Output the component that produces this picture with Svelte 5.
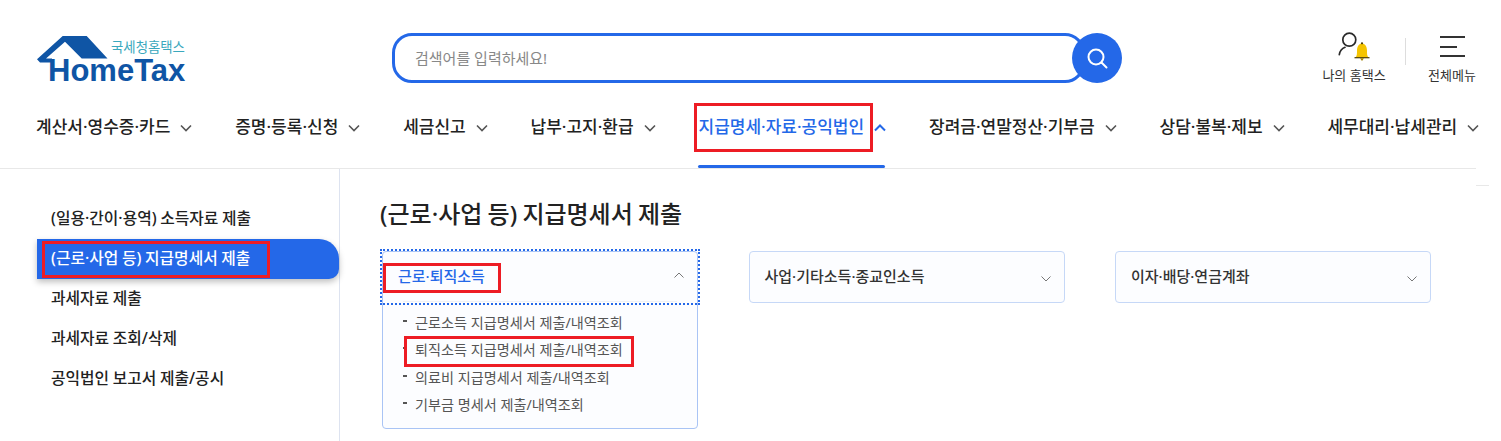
<script>
	const navItems = [
		{ label: '계산서·영수증·카드' },
		{ label: '증명·등록·신청' },
		{ label: '세금신고' },
		{ label: '납부·고지·환급' },
		{ label: '지급명세·자료·공익법인', active: true },
		{ label: '장려금·연말정산·기부금' },
		{ label: '상담·불복·제보' },
		{ label: '세무대리·납세관리' }
	];

	const sideItems = [
		{ label: '(일용·간이·용역) 소득자료 제출' },
		{ label: '(근로·사업 등) 지급명세서 제출', active: true },
		{ label: '과세자료 제출' },
		{ label: '과세자료 조회/삭제' },
		{ label: '공익법인 보고서 제출/공시' }
	];

	const subItems = [
		{ label: '근로소득 지급명세서 제출/내역조회' },
		{ label: '퇴직소득 지급명세서 제출/내역조회', marked: true },
		{ label: '의료비 지급명세서 제출/내역조회' },
		{ label: '기부금 명세서 제출/내역조회' }
	];
</script>

<div class="page">
	<header class="header">
		<div class="top">
			<a class="logo" href="#home">
				<svg class="roof" viewBox="0 0 72 28" width="72" height="28" aria-hidden="true">
					<path d="M0 23.3 L25.7 0 L49.7 0 L70.5 22.5 L44.7 22.5 L28 5.7 L9 22.5 L15 22.5 L15 26.5 L3 26.5 Z" fill="#0f55a5" />
				</svg>
				<span class="logo_sub">국세청홈택스</span>
				<span class="logo_main">HomeTax</span>
			</a>

			<div class="search">
				<div class="search_box">검색어를 입력하세요!</div>
				<button class="search_btn" aria-label="검색">
					<svg viewBox="0 0 24 24" width="24" height="24" fill="none" stroke="#fff" stroke-width="2">
						<circle cx="11" cy="11" r="7.5" />
						<path d="M16.5 16.5 L21.5 21.5" stroke-linecap="round" />
					</svg>
				</button>
			</div>

			<div class="util">
				<div class="util_item my">
					<svg viewBox="0 0 34 32" width="34" height="32" aria-hidden="true">
						<circle cx="12.3" cy="8.7" r="6.5" fill="none" stroke="#2a2a2a" stroke-width="1.7" />
						<path d="M2.3 23.7 C3 19.5 5 17.3 8 16.3" fill="none" stroke="#2a2a2a" stroke-width="1.7" stroke-linecap="round" />
						<path d="M18.5 26.5 C20 25 20 23 20 19.5 C20 15 22.5 12.5 25 12.5 C27.5 12.5 30 15 30 19.5 C30 23 30 25 31.5 26.5 Z" fill="#f5c400" />
						<path d="M17.5 26.7 H32.5" stroke="#4a3c00" stroke-width="1.2" />
						<path d="M23 27.3 H27 L25 30 Z" fill="#a08000" />
						<circle cx="25" cy="12.3" r="1.1" fill="#4a3c00" />
					</svg>
					<span>나의 홈택스</span>
				</div>
				<div class="util_sep"></div>
				<div class="util_item menu">
					<div class="burger">
						<i></i>
						<i class="short"></i>
						<i></i>
					</div>
					<span>전체메뉴</span>
				</div>
			</div>
		</div>

		<nav class="nav">
			{#each navItems as item}
				<div class="nav_item" class:active={item.active}>
					<span class="nav_text">{item.label}</span>
					<svg viewBox="0 0 12 8" width="12" height="8" fill="none" stroke="currentColor" stroke-width="1.6" aria-hidden="true">
						{#if item.active}
							<path d="M1 6.5 L6 1.5 L11 6.5" />
						{:else}
							<path d="M1 1.5 L6 6.5 L11 1.5" />
						{/if}
					</svg>
					{#if item.active}
						<span class="mark nav_mark"></span>
					{/if}
				</div>
			{/each}
		</nav>
	</header>
	<div class="edge"></div>

	<div class="body">
		<aside class="side">
			{#each sideItems as item}
				<div class="side_item" class:active={item.active}>
					{item.label}
					{#if item.active}
						<span class="mark side_mark"></span>
					{/if}
				</div>
			{/each}
		</aside>

		<main class="main">
			<h1 class="title">(근로·사업 등) 지급명세서 제출</h1>
			<div class="cards">
				<div class="card open">
					<div class="card_head focus">
						<span class="card_title">근로·퇴직소득</span>
						<svg class="chev_up" viewBox="0 0 10 6" width="10" height="6" fill="none" stroke="#777" stroke-width="1" aria-hidden="true">
							<path d="M0.5 5.5 L5 1 L9.5 5.5" />
						</svg>
						<span class="mark head_mark"></span>
					</div>
					<ul class="sub">
						{#each subItems as sub}
							<li>
								{sub.label}
								{#if sub.marked}
									<span class="mark sub_mark"></span>
								{/if}
							</li>
						{/each}
					</ul>
				</div>
				<div class="card">
					<div class="card_head">
						<span class="card_title">사업·기타소득·종교인소득</span>
						<svg class="chev_down" viewBox="0 0 10 6" width="10" height="6" fill="none" stroke="#777" stroke-width="1" aria-hidden="true">
							<path d="M0.5 0.5 L5 5 L9.5 0.5" />
						</svg>
					</div>
				</div>
				<div class="card">
					<div class="card_head">
						<span class="card_title">이자·배당·연금계좌</span>
						<svg class="chev_down" viewBox="0 0 10 6" width="10" height="6" fill="none" stroke="#777" stroke-width="1" aria-hidden="true">
							<path d="M0.5 0.5 L5 5 L9.5 0.5" />
						</svg>
					</div>
				</div>
			</div>
		</main>
	</div>
</div>

<style>
	:global(body) {
		margin: 0;
		background: #fff;
		overflow: hidden;
	}

	.page {
		position: relative;
		width: 1476px;
		height: 441px;
		font-family: 'Noto Sans', 'Noto Sans CJK KR', sans-serif;
		color: #222;
	}

	/* ---------- HEADER ---------- */

	.header {
		height: 168px;
		border-bottom: 1px solid #e8e8e8;
	}

	.top {
		display: flex;
		height: 100px;
		box-sizing: border-box;
		padding: 33px 0 0 37px;
	}

	.top > * {
		flex-shrink: 0;
	}

	.logo {
		position: relative;
		display: block;
		width: 150px;
		height: 52px;
		text-decoration: none;
	}

	.roof {
		position: absolute;
		left: 0;
		top: 3px;
	}

	.logo_sub {
		position: absolute;
		left: 74px;
		top: 5px;
		font-size: 13.4px;
		line-height: 18px;
		color: #3aa8bd;
		white-space: nowrap;
	}

	.logo_main {
		position: absolute;
		left: 11px;
		top: 20px;
		font-family: 'Liberation Sans', sans-serif;
		font-size: 31px;
		line-height: 36px;
		font-weight: 700;
		color: #0f55a5;
		white-space: nowrap;
	}

	.search {
		display: flex;
		align-items: center;
		margin-left: 205px;
		height: 50px;
	}

	.search_box {
		box-sizing: border-box;
		width: 693px;
		height: 50px;
		border: 3px solid #2468e8;
		border-radius: 20px;
		padding-left: 20px;
		font-size: 15px;
		line-height: 44px;
		color: #888;
		background: #fff;
	}

	.search_btn {
		flex-shrink: 0;
		width: 50px;
		height: 50px;
		margin-left: -13px;
		border: none;
		border-radius: 50%;
		background: #2468e8;
		display: flex;
		align-items: center;
		justify-content: center;
		padding: 0;
	}

	.util {
		display: flex;
		align-items: flex-start;
		margin-left: 198px;
	}

	.util_item {
		display: flex;
		flex-direction: column;
		align-items: center;
		font-size: 13px;
		line-height: 16px;
		color: #333;
		white-space: nowrap;
	}

	.util_item.my {
		width: 68px;
	}

	.util_item.my svg {
		margin-top: -2px;
		margin-bottom: 4px;
	}

	.util_sep {
		width: 1px;
		height: 27px;
		margin: 5px 21px 0 17px;
		background: #ddd;
	}

	.util_item.menu {
		width: 50px;
	}

	.burger {
		display: flex;
		flex-direction: column;
		align-items: flex-start;
		gap: 7.5px;
		width: 25px;
		padding: 3px 0 10px;
	}

	.burger i {
		display: block;
		width: 25px;
		height: 2px;
		background: #333;
	}

	.burger i.short {
		width: 17px;
	}

	/* ---------- NAV ---------- */

	.nav {
		display: flex;
		height: 68px;
		padding-left: 36px;
		white-space: nowrap;
	}

	.nav_item {
		position: relative;
		display: flex;
		align-items: flex-start;
		padding-top: 16px;
		margin-right: 42.85px;
		font-size: 17px;
		line-height: 22px;
		font-weight: 500;
		color: #222;
	}

	.nav_item svg {
		margin: 8px 0 0 10px;
		color: #555;
	}

	.nav_item.active {
		color: #2468e8;
	}

	.nav_item.active svg {
		color: #2468e8;
		stroke-width: 2;
	}

	.nav_item.active::after {
		content: '';
		position: absolute;
		left: -1px;
		right: 1px;
		bottom: 0;
		height: 3px;
		border-radius: 2px;
		background: #2468e8;
	}

	.edge {
		position: absolute;
		left: 1476px;
		top: 185px;
		width: 13px;
		height: 1px;
		background: #e8e8e8;
	}

	/* ---------- BODY ---------- */

	.body {
		display: flex;
		height: 272px;
	}

	.side {
		width: 340px;
		box-sizing: border-box;
		border-right: 1px solid #dde3f0;
		padding: 30px 0 0 37px;
		flex-shrink: 0;
	}

	.side_item {
		position: relative;
		height: 40px;
		padding-left: 14px;
		font-size: 15.8px;
		line-height: 38px;
		font-weight: 500;
		word-spacing: -0.5px;
		color: #222;
	}

	.side_item.active {
		background: #2468e8;
		color: #fff;
		border-radius: 0 20px 10px 0;
		box-shadow: 0 3px 6px rgba(0, 0, 0, 0.25);
	}

	.main {
		flex: 1;
		padding-left: 40px;
	}

	.title {
		margin: 28px 0 20px;
		font-size: 24px;
		line-height: 34px;
		font-weight: 500;
		word-spacing: -1px;
		color: #222;
	}

	.cards {
		display: flex;
		align-items: flex-start;
		gap: 50.5px;
		margin-left: 2px;
	}

	.card {
		width: 316px;
		flex-shrink: 0;
		box-sizing: border-box;
		border: 1px solid #c6d8f7;
		border-radius: 4px;
		background: #fcfdff;
	}

	.card.open {
		border-color: #a9c4f5;
	}

	.card_head {
		position: relative;
		display: flex;
		align-items: center;
		justify-content: space-between;
		box-sizing: border-box;
		height: 50px;
		padding: 0 13px 3px 15px;
	}

	.card_head.focus {
		outline: 2px dotted #2468e8;
		outline-offset: 1px;
	}

	.card_head.focus::after {
		content: '';
		position: absolute;
		left: 20px;
		right: 20px;
		bottom: 0;
		height: 1px;
		background: #eef1f7;
	}

	.chev_up {
		margin-top: -2px;
	}

	.chev_down {
		margin-top: 7px;
	}

	.card_title {
		font-size: 15px;
		font-weight: 500;
		color: #333;
	}

	.open .card_title {
		color: #2468e8;
	}

	.sub {
		list-style: none;
		margin: 0;
		padding: 7px 0 10px 32px;
	}

	.sub li {
		position: relative;
		height: 27.33px;
		font-size: 14.15px;
		line-height: 27.33px;
		color: #555;
		white-space: nowrap;
	}

	.sub li::before {
		content: '';
		position: absolute;
		left: -12px;
		top: 11px;
		width: 4px;
		height: 2px;
		background: #555;
	}

	/* ---------- RED MARKS ---------- */

	.mark {
		position: absolute;
		border: 3px solid #ed1c24;
		box-sizing: border-box;
		pointer-events: none;
	}

	.nav_mark {
		left: -5px;
		top: 3px;
		width: 179px;
		height: 49px;
	}

	.side_mark {
		left: 5px;
		top: 2px;
		width: 228px;
		height: 37px;
	}

	.head_mark {
		left: 0;
		top: 11px;
		width: 118px;
		height: 30px;
	}

	.sub_mark {
		left: -11px;
		top: 0;
		width: 230px;
		height: 31px;
	}
</style>
